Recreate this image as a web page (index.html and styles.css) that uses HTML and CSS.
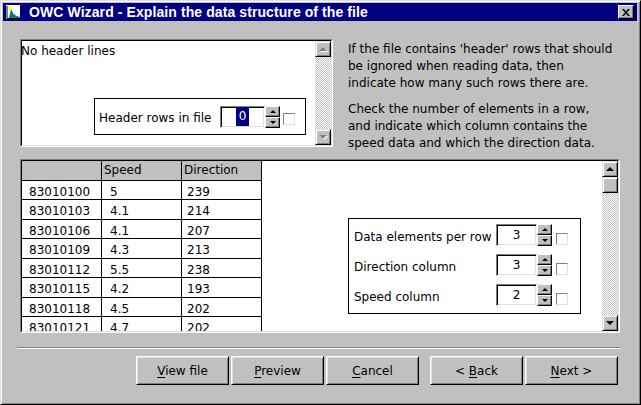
FILE: index.html
```html
<!DOCTYPE html>
<html lang="en">
<head>
    <meta charset="UTF-8">
    <title>OWC Wizard</title>
    <link rel="stylesheet" href="styles.css">
</head>
<body>
    <div class="window">
        <div class="titlebar">
            <svg class="app-icon" width="16" height="16" viewBox="0 0 16 16">
                <rect x="0" y="0" width="16" height="16" fill="#fff"/>
                <rect x="0.5" y="0.5" width="15" height="15" fill="none" stroke="#000080"/>
                <polygon points="4,14 5,9 6,5 7,7 8,9 10,11 12,12 15,13 15,14" fill="#008080"/>
                <polygon points="4,1 5,3 7,2 6,4 8,5 6,5 6,7 5,5 3,6 4,4 2,3 4,3" fill="#ffff00"/>
                <path d="M2 2V14.5H15" stroke="#000" fill="none"/>
                <path d="M4 15V16M6 15V16M8 15V16M10 15V16M12 15V16M14 15V16" stroke="#000"/>
            </svg>
            <span class="title">OWC Wizard - Explain the data structure of the file</span>
            <div class="close-btn">
                <svg width="8" height="7" viewBox="0 0 8 7">
                    <path d="M0 0L2 0L4 2.5L6 0L8 0L5 3.5L8 7L6 7L4 4.5L2 7L0 7L3 3.5Z" fill="#000"/>
                </svg>
            </div>
        </div>

        <div class="body">
            <div class="top-row">
                <div class="panel header-panel">
                    <div class="panel-frame">
                        <div class="panel-view header-view">
                            <div class="panel-text">No header lines</div>
                            <div class="field-box header-box">
                                <span class="field-label">Header rows in file</span>
                                <div class="spin-field">
                                    <div class="spin-input wide"><span class="selected">0</span></div>
                                    <div class="spinner">
                                        <div class="spin-btn spin-up"></div>
                                        <div class="spin-btn spin-down"></div>
                                    </div>
                                </div>
                                <div class="checkbox"></div>
                            </div>
                        </div>
                        <div class="scrollbar disabled">
                            <div class="scroll-btn scroll-up"></div>
                            <div class="scroll-track"></div>
                            <div class="scroll-btn scroll-down"></div>
                        </div>
                    </div>
                </div>
                <div class="help-text">
                    <p>If the file contains 'header' rows that should<br>be ignored when reading data, then<br>indicate how many such rows there are.</p>
                    <p>Check the number of elements in a row,<br>and indicate which column contains the<br>speed data and which the direction data.</p>
                </div>
            </div>

            <div class="panel data-panel">
                <div class="panel-frame">
                    <div class="panel-view data-view">
                        <div class="grid">
                            <div class="cell head"></div>
                            <div class="cell head">Speed</div>
                            <div class="cell head">Direction</div>

                            <div class="cell">83010100</div><div class="cell col-speed">5</div><div class="cell col-dir">239</div>
                            <div class="cell">83010103</div><div class="cell col-speed">4.1</div><div class="cell col-dir">214</div>
                            <div class="cell">83010106</div><div class="cell col-speed">4.1</div><div class="cell col-dir">207</div>
                            <div class="cell">83010109</div><div class="cell col-speed">4.3</div><div class="cell col-dir">213</div>
                            <div class="cell">83010112</div><div class="cell col-speed">5.5</div><div class="cell col-dir">238</div>
                            <div class="cell">83010115</div><div class="cell col-speed">4.2</div><div class="cell col-dir">193</div>
                            <div class="cell">83010118</div><div class="cell col-speed">4.5</div><div class="cell col-dir">202</div>
                            <div class="cell">83010121</div><div class="cell col-speed">4.7</div><div class="cell col-dir">202</div>
                            <div class="cell">83010124</div><div class="cell col-speed">4.6</div><div class="cell col-dir">205</div>
                        </div>
                        <div class="settings-area">
                            <div class="field-box settings-box">
                                <div class="setting-row">
                                    <span class="field-label">Data elements per row</span>
                                    <div class="spin-field">
                                        <div class="spin-input">3</div>
                                        <div class="spinner">
                                            <div class="spin-btn spin-up"></div>
                                            <div class="spin-btn spin-down"></div>
                                        </div>
                                    </div>
                                    <div class="checkbox"></div>
                                </div>
                                <div class="setting-row">
                                    <span class="field-label">Direction column</span>
                                    <div class="spin-field">
                                        <div class="spin-input">3</div>
                                        <div class="spinner">
                                            <div class="spin-btn spin-up"></div>
                                            <div class="spin-btn spin-down"></div>
                                        </div>
                                    </div>
                                    <div class="checkbox"></div>
                                </div>
                                <div class="setting-row">
                                    <span class="field-label">Speed column</span>
                                    <div class="spin-field">
                                        <div class="spin-input">2</div>
                                        <div class="spinner">
                                            <div class="spin-btn spin-up"></div>
                                            <div class="spin-btn spin-down"></div>
                                        </div>
                                    </div>
                                    <div class="checkbox"></div>
                                </div>
                            </div>
                        </div>
                    </div>
                    <div class="scrollbar">
                        <div class="scroll-btn scroll-up"></div>
                        <div class="scroll-thumb"></div>
                        <div class="scroll-track"></div>
                        <div class="scroll-btn scroll-down"></div>
                    </div>
                </div>
            </div>

            <div class="separator"></div>

            <div class="button-row">
                <div class="btn-group">
                    <button class="btn"><u>V</u>iew file</button>
                    <button class="btn"><u>P</u>review</button>
                    <button class="btn"><u>C</u>ancel</button>
                </div>
                <div class="btn-group">
                    <button class="btn">&lt; <u>B</u>ack</button>
                    <button class="btn"><u>N</u>ext &gt;</button>
                </div>
            </div>
        </div>
    </div>
</body>
</html>
```

FILE: styles.css
```css
* {
    margin: 0;
    padding: 0;
    box-sizing: border-box;
}

body {
    font-family: 'DejaVu Sans', 'Liberation Sans', sans-serif;
    font-size: 12px;
    color: #000;
    background: #c0c0c0;
    overflow: hidden;
}

.window {
    width: 641px;
    height: 405px;
    background: #c0c0c0;
    border: 1px solid;
    border-color: #dfdfdf #000 #000 #dfdfdf;
    box-shadow: inset 1px 1px #fff, inset -1px -1px #808080;
    padding: 2px 3px 2px 2px;
    display: flex;
    flex-direction: column;
}

/* Title bar */
.titlebar {
    height: 18px;
    background: #000080;
    display: flex;
    align-items: center;
    padding: 0 3px 0 2px;
}

.app-icon {
    display: block;
    flex-shrink: 0;
}

.title {
    margin-left: 8px;
    flex: 1;
    color: #fff;
    font-family: 'Liberation Sans', Arial, sans-serif;
    font-weight: bold;
    font-size: 14px;
    letter-spacing: 0.09px;
    white-space: nowrap;
}

.close-btn {
    width: 16px;
    height: 14px;
    background: #c0c0c0;
    border: 1px solid;
    border-color: #fff #000 #000 #fff;
    box-shadow: inset -1px -1px #808080;
    display: flex;
    align-items: center;
    justify-content: center;
}

.close-btn svg {
    display: block;
}

/* Content */
.body {
    flex: 1;
    padding: 18px 17px 0 17px;
    display: flex;
    flex-direction: column;
}

.top-row {
    display: flex;
    height: 108px;
}

.panel {
    border: 1px solid;
    border-color: #808080 #fff #fff #808080;
}

.panel-frame {
    height: 100%;
    border: 1px solid;
    border-color: #000 #dfdfdf #dfdfdf #000;
    background: #fff;
    display: flex;
    overflow: hidden;
}

.panel-view {
    flex: 1;
    position: relative;
}

.header-panel {
    width: 313px;
    flex-shrink: 0;
}

.header-view {
    display: flex;
    flex-direction: column;
    align-items: flex-end;
    justify-content: space-between;
    padding: 3px 9px 10px 0;
}

.panel-text {
    align-self: flex-start;
    line-height: 15px;
    margin-left: -1px;
}

.help-text {
    margin-left: 15px;
    padding-top: 2px;
    line-height: 17px;
    white-space: nowrap;
}

.help-text p + p {
    margin-top: 9px;
}

/* Bordered groups with spin fields */
.field-box {
    border: 1px solid #000;
    background: #fff;
}

.header-box {
    width: 212px;
    height: 37px;
    display: flex;
    align-items: center;
    padding: 0 10px 0 4px;
}

.header-box .spin-field {
    margin-left: auto;
}

.header-box .checkbox {
    margin-left: 3px;
    margin-top: 4px;
}

.field-label {
    white-space: nowrap;
    padding-top: 3px;
}

.spin-field {
    display: flex;
}

.spin-input {
    width: 41px;
    height: 22px;
    background: #fff;
    border: 1px solid;
    border-color: #808080 #fff #fff #808080;
    box-shadow: inset 1px 1px #000, inset -1px -1px #dfdfdf;
    display: flex;
    align-items: center;
    justify-content: center;
}

.spin-input.wide {
    width: 45px;
}

.selected {
    background: #000080;
    color: #fff;
    line-height: 19px;
    padding: 0 3px;
}

.spinner {
    width: 15px;
    height: 22px;
    display: flex;
    flex-direction: column;
}

.spin-btn {
    flex: 1;
    background: #c0c0c0;
    border: 1px solid;
    border-color: #fff #000 #000 #fff;
    box-shadow: inset -1px -1px #808080;
    display: flex;
    align-items: center;
    justify-content: center;
}

.spin-btn::before {
    content: "";
    border-left: 3px solid transparent;
    border-right: 3px solid transparent;
}

.spin-up::before {
    border-bottom: 3px solid #000;
}

.spin-down::before {
    border-top: 3px solid #000;
}

.checkbox {
    width: 12px;
    height: 12px;
    background: #fff;
    border: 1px solid;
    border-color: #808080 #dfdfdf #dfdfdf #808080;
    flex-shrink: 0;
}

/* Scrollbars */
.scrollbar {
    width: 16px;
    flex-shrink: 0;
    display: flex;
    flex-direction: column;
}

.scroll-btn,
.scroll-thumb {
    height: 16px;
    background: #c0c0c0;
    border: 1px solid;
    border-color: #dfdfdf #000 #000 #dfdfdf;
    box-shadow: inset 1px 1px #fff, inset -1px -1px #808080;
    display: flex;
    align-items: center;
    justify-content: center;
    flex-shrink: 0;
}

.scroll-btn::before {
    content: "";
    border-left: 4px solid transparent;
    border-right: 4px solid transparent;
}

.scroll-up::before {
    border-bottom: 4px solid #000;
    margin-top: -1px;
}

.scroll-down::before {
    border-top: 4px solid #000;
}

.scrollbar.disabled .scroll-up::before {
    border-bottom-color: #808080;
    filter: drop-shadow(1px 1px 0 #fff);
}

.scrollbar.disabled .scroll-down::before {
    border-top-color: #808080;
    filter: drop-shadow(1px 1px 0 #fff);
}

.scroll-track {
    flex: 1;
    background-color: #fff;
    background-image: conic-gradient(#c0c0c0 25%, #fff 0 50%, #c0c0c0 0 75%, #fff 0);
    background-size: 2px 2px;
}

/* Data panel */
.data-panel {
    margin-top: 12px;
    width: 600px;
    height: 174px;
}

.data-view {
    display: flex;
    overflow: hidden;
}

.grid {
    display: grid;
    grid-template-columns: 80px 80px 80px;
    grid-auto-rows: 19.5px;
    align-content: start;
    flex-shrink: 0;
}

.cell {
    border-right: 1px solid #000;
    border-bottom: 1px solid #000;
    line-height: 18px;
    padding-top: 2px;
    padding-left: 7px;
    white-space: nowrap;
}

.cell.head {
    background: #c0c0c0;
    line-height: 19px;
    padding-top: 0;
    padding-left: 2px;
}

.cell.col-speed {
    padding-left: 8px;
}

.cell.col-dir {
    padding-left: 5px;
}

.settings-area {
    flex: 1;
    display: flex;
    justify-content: flex-end;
    align-items: flex-start;
    padding: 57px 21px 0 0;
}

.settings-box {
    width: 233px;
    height: 96px;
    padding: 5px 12px 7px 5px;
    display: flex;
    flex-direction: column;
    gap: 8px;
}

.setting-row {
    display: flex;
    align-items: center;
}

.setting-row .spin-field {
    margin-left: auto;
}

.setting-row .checkbox {
    margin-left: 4px;
    margin-top: 8px;
}

/* Bottom */
.separator {
    margin: 14px -1px 0 -3px;
    border-top: 1px solid #808080;
    border-bottom: 1px solid #fff;
}

.button-row {
    margin-top: 7px;
    display: flex;
    justify-content: flex-end;
    gap: 11px;
    padding-right: 2px;
}

.btn-group {
    display: flex;
    gap: 2px;
}

.btn {
    width: 93px;
    height: 29px;
    background: #c0c0c0;
    border: 1px solid;
    border-color: #fff #000 #000 #fff;
    box-shadow: inset 1px 1px #dfdfdf, inset -1px -1px #808080;
    font-family: inherit;
    font-size: 12px;
    color: #000;
}

.btn u {
    text-decoration-thickness: 1px;
    text-underline-offset: 2px;
}
```
